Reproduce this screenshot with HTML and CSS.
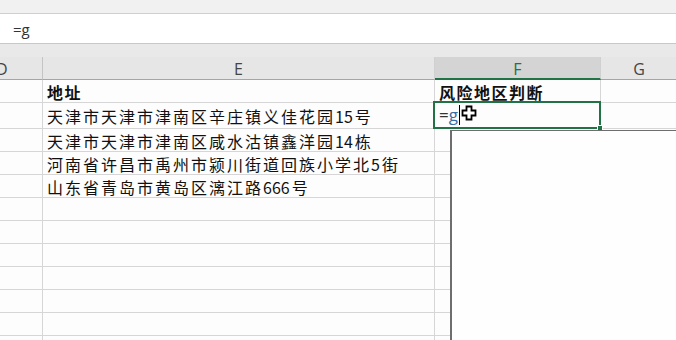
FILE: index.html
```html
<!DOCTYPE html>
<html>
<head>
<meta charset="utf-8">
<link rel="stylesheet" href="styles.css">
</head>
<body>
<div class="app">
  <div class="topbar"></div>
  <div class="formulabar"><span class="fx">=g</span></div>
  <div class="spacer"></div>
  <div class="sheet">
    <div class="grid">
      <div class="hd c-d"><span class="dletter">D</span></div>
      <div class="hd">E</div>
      <div class="hd sel">F</div>
      <div class="hd last">G</div>

      <div class="cell"></div>
      <div class="cell bold">地址</div>
      <div class="cell bold">风险地区判断</div>
      <div class="cell last"></div>

      <div class="cell tall"></div>
      <div class="cell tall">天津市天津市津南区辛庄镇义佳花园<span class="num">15</span>号</div>
      <div class="cell tall"></div>
      <div class="cell tall last"></div>

      <div class="cell"></div>
      <div class="cell">天津市天津市津南区咸水沽镇鑫洋园<span class="num">14</span>栋</div>
      <div class="cell"></div>
      <div class="cell last"></div>

      <div class="cell"></div>
      <div class="cell">河南省许昌市禹州市颍川街道回族小学北<span class="num">5</span>街</div>
      <div class="cell"></div>
      <div class="cell last"></div>

      <div class="cell"></div>
      <div class="cell">山东省青岛市黄岛区漓江路<span class="num">666</span>号</div>
      <div class="cell"></div>
      <div class="cell last"></div>

      <div class="cell"></div><div class="cell"></div><div class="cell"></div><div class="cell last"></div>
      <div class="cell"></div><div class="cell"></div><div class="cell"></div><div class="cell last"></div>
      <div class="cell"></div><div class="cell"></div><div class="cell"></div><div class="cell last"></div>
      <div class="cell"></div><div class="cell"></div><div class="cell"></div><div class="cell last"></div>
      <div class="cell"></div><div class="cell"></div><div class="cell"></div><div class="cell last"></div>
      <div class="cell"></div><div class="cell"></div><div class="cell"></div><div class="cell last"></div>
      <div class="cell"></div><div class="cell"></div><div class="cell"></div><div class="cell last"></div>
    </div>

    <div class="selbox">
      <span class="edit"><span class="eq">=</span><span class="g">g</span></span><span class="caret"></span>
      <svg class="cross" width="16" height="16" viewBox="0 0 16 16">
        <path d="M5.5 1.5h5v4h4v5h-4v4h-5v-4h-4v-5h4z" fill="#fff" stroke="#000" stroke-width="1.8"/>
      </svg>
      <span class="handle"></span>
    </div>
    <div class="dropdown"></div>
  </div>
</div>
</body>
</html>
```

FILE: styles.css
```css
* { box-sizing: border-box; }
html, body { margin: 0; padding: 0; }
body {
  width: 676px;
  height: 340px;
  overflow: hidden;
  background: #fdfdfd;
  font-family: "Noto Sans CJK SC", "Noto Sans", sans-serif;
}
.app { display: flex; flex-direction: column; width: 676px; height: 340px; }
.topbar {
  height: 14px;
  background: #f1f1f1;
  border-bottom: 1px solid #cfcfcf;
}
.formulabar {
  height: 30px;
  background: #ffffff;
  border-bottom: 1px solid #c8c8c8;
  display: flex;
  align-items: center;
  padding-left: 13px;
}
.fx {
  font-family: "Open Sans", "Noto Sans", sans-serif;
  font-size: 15px;
  color: #333;
}
.spacer { height: 13px; background: #e9e9e9; }
.sheet { position: relative; flex: 1; overflow: hidden; }
.grid {
  display: grid;
  grid-template-columns: 43px 392px 166px 76px;
  grid-template-rows: 23px 23px 26px;
  grid-auto-rows: 23px;
  width: 677px;
}
.hd {
  height: 23px;
  background: #e6e6e6;
  border-bottom: 1px solid #a5a5a5;
  border-right: 1px solid #d0d0d0;
  font-family: "Open Sans", "Noto Sans", sans-serif;
  font-size: 16px;
  color: #444;
  display: flex;
  align-items: center;
  justify-content: center;
  line-height: 1;
  padding-top: 1px;
}
.hd.c-d { justify-content: flex-start; overflow: hidden; border-right-color: #c4c4c4; }
.dletter { margin-left: -4px; }
.hd.sel {
  background: #d4d4d4;
  color: #217346;
  border-bottom: 2px solid #217346;
  padding-top: 2px;
}
.hd.last { border-right: none; }
.cell {
  border-right: 1px solid #d6d6d6;
  border-bottom: 1px solid #d6d6d6;
  font-size: 16px;
  letter-spacing: 2px;
  color: #111;
  padding-left: 4px;
  display: flex;
  align-items: center;
  white-space: nowrap;
  line-height: 1;
  padding-top: 1px;
}
.cell.tall { height: 26px; }
.cell.last { border-right: none; }
.bold { font-weight: 700; letter-spacing: 1.5px; }
.num { letter-spacing: 0; margin-right: 2px; }

.selbox {
  position: absolute;
  left: 433px;
  top: 44px;
  width: 168px;
  height: 28px;
  border: 2px solid #217346;
  display: flex;
  align-items: center;
  padding-left: 4px;
}
.edit {
  font-family: "Open Sans", "Noto Sans", sans-serif;
  font-size: 17px;
  line-height: 1;
  color: #333;
  margin-top: -2px;
}
.edit .g { color: #3a6ea5; }
.caret {
  width: 1px;
  height: 20px;
  background: #000;
  margin-left: 1px;
}
.cross { margin-left: 1px; margin-top: -5px; }
.handle {
  position: absolute;
  right: -4px;
  bottom: -4px;
  width: 6px;
  height: 6px;
  background: #217346;
  border: 1px solid #fff;
}
.dropdown {
  position: absolute;
  left: 450px;
  top: 73px;
  width: 240px;
  height: 240px;
  background: #fefefe;
  border: 1px solid #6e6e6e;
  border-left-width: 2px;
}
```
